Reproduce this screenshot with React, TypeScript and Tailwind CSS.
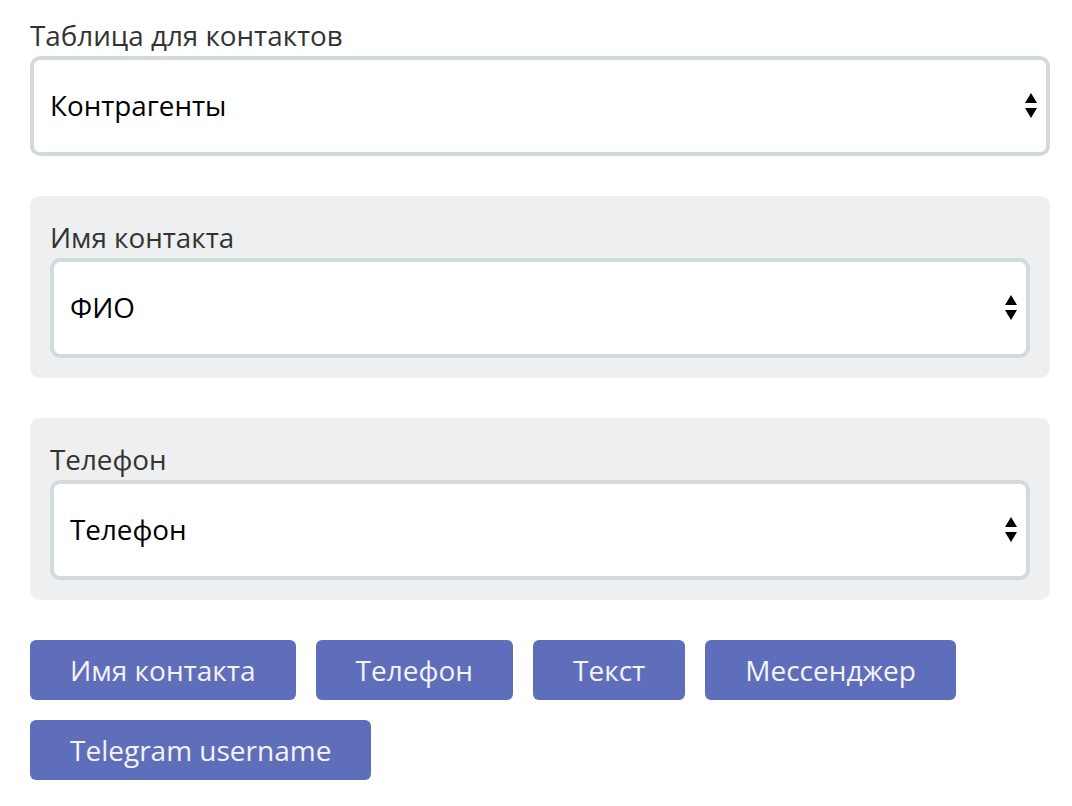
import React from "react";

function Arrows() {
  return (
    <svg width="12" height="26" viewBox="0 0 12 26" className="shrink-0">
      <polygon points="6,0 12,10 0,10" fill="#000" />
      <polygon points="0,15 12,15 6,25" fill="#000" />
    </svg>
  );
}

function Select({ value }: { value: string }) {
  return (
    <div className="flex h-[100px] items-center justify-between rounded-[10px] border-4 border-[#d3dadd] bg-white pl-4 pr-[9px]">
      <span className="text-[27.8px] leading-none text-black">{value}</span>
      <Arrows />
    </div>
  );
}

function Label({ children }: { children: React.ReactNode }) {
  return <div className="h-[42px] text-[27.8px] leading-[42px] text-[#333333]">{children}</div>;
}

function Panel({ label, value }: { label: string; value: string }) {
  return (
    <div className="rounded-[10px] bg-[#eeeff1] p-5">
      <Label>{label}</Label>
      <Select value={value} />
    </div>
  );
}

const buttons = ["Имя контакта", "Телефон", "Текст", "Мессенджер", "Telegram username"];

export default function App() {
  return (
    <div
      className="min-h-screen w-[1072px] bg-white px-[30px] pt-[14px]"
      style={{ fontFamily: '"Open Sans", "Noto Sans", sans-serif' }}
    >
      <div className="w-[1020px]">
        <Label>Таблица для контактов</Label>
        <Select value="Контрагенты" />
        <div className="mt-10 flex flex-col gap-10">
          <Panel label="Имя контакта" value="ФИО" />
          <Panel label="Телефон" value="Телефон" />
        </div>
        <div className="mt-10 flex flex-wrap gap-5 pr-[80px]">
          {buttons.map((b) => (
            <div
              key={b}
              className="flex h-[60px] items-center rounded-[6px] bg-[#5f6ebb] px-10 text-[28px] leading-none text-[#f3f3f8]"
            >
              {b}
            </div>
          ))}
        </div>
      </div>
    </div>
  );
}
